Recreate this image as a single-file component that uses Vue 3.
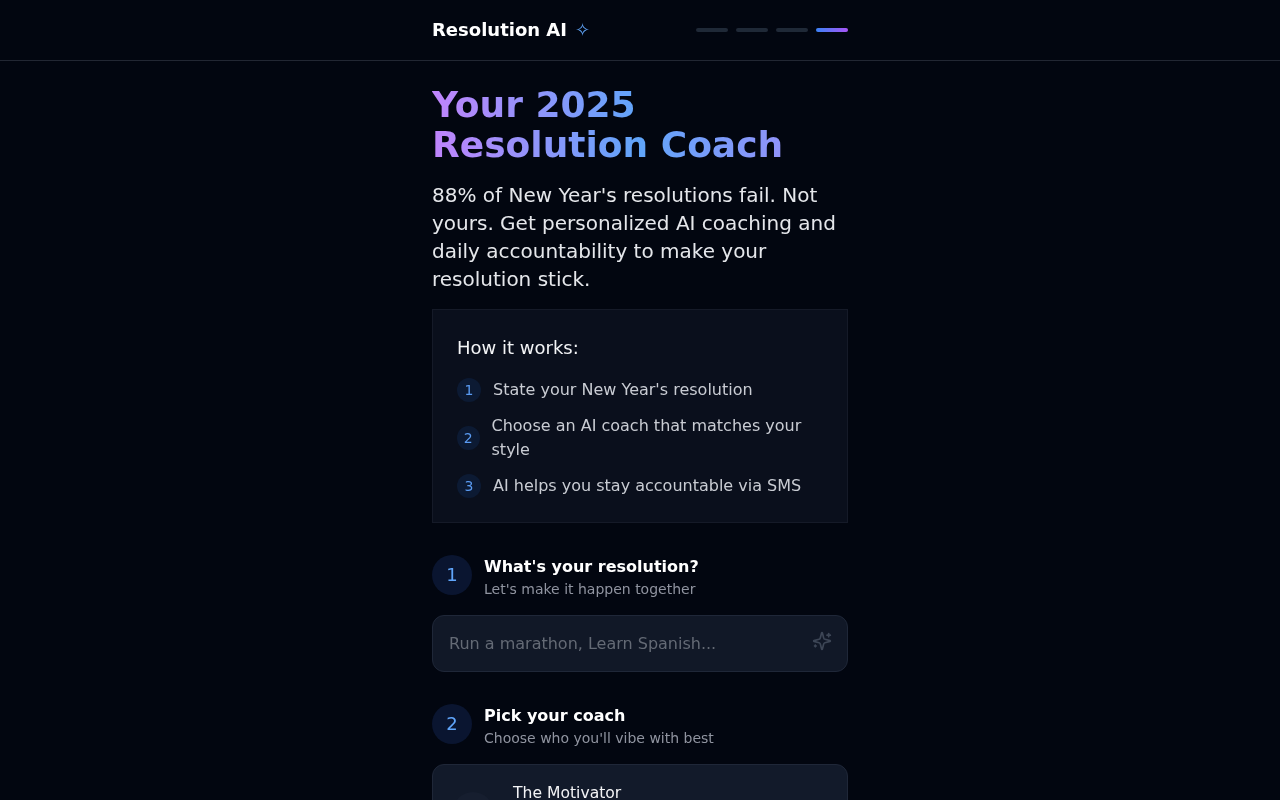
<script setup>
const steps = [
  "State your New Year's resolution",
  'Choose an AI coach that matches your style',
  'AI helps you stay accountable via SMS',
]
</script>

<template>
  <div class="page">
    <header class="top">
      <div class="top-inner">
        <div class="brand"><span>Resolution AI</span><span class="star">✧</span></div>
        <div class="progress">
          <span class="bar"></span><span class="bar"></span><span class="bar"></span><span class="bar on"></span>
        </div>
      </div>
    </header>
    <main class="main">
      <h1 class="title">Your 2025 Resolution Coach</h1>
      <p class="lead">88% of New Year's resolutions fail. Not yours. Get personalized AI coaching and daily accountability to make your resolution stick.</p>
      <section class="how">
        <h2 class="how-title">How it works:</h2>
        <ul class="how-list">
          <li v-for="(s, i) in steps" :key="i" class="how-item">
            <span class="how-num">{{ i + 1 }}</span>
            <span>{{ s }}</span>
          </li>
        </ul>
      </section>
      <section class="step">
        <div class="step-head">
          <div class="step-num">1</div>
          <div>
            <h3 class="step-title">What's your resolution?</h3>
            <p class="step-sub">Let's make it happen together</p>
          </div>
        </div>
        <div class="field">
          <input class="input" type="text" placeholder="Run a marathon, Learn Spanish..." />
          <svg class="spark" viewBox="0 0 24 24" fill="none" stroke="currentColor" stroke-width="2" stroke-linecap="round" stroke-linejoin="round">
            <path d="M9.937 15.5A2 2 0 0 0 8.5 14.063l-6.135-1.582a.5.5 0 0 1 0-.962L8.5 9.936A2 2 0 0 0 9.937 8.5l1.582-6.135a.5.5 0 0 1 .963 0L14.063 8.5A2 2 0 0 0 15.5 9.937l6.135 1.581a.5.5 0 0 1 0 .964L15.5 14.063a2 2 0 0 0-1.437 1.437l-1.582 6.135a.5.5 0 0 1-.963 0z"/>
            <path d="M20 3v4"/><path d="M22 5h-4"/><path d="M4 17v2"/><path d="M5 18H3"/>
          </svg>
        </div>
      </section>
      <section class="step">
        <div class="step-head">
          <div class="step-num">2</div>
          <div>
            <h3 class="step-title">Pick your coach</h3>
            <p class="step-sub">Choose who you'll vibe with best</p>
          </div>
        </div>
        <div class="coach">
          <div class="avatar"></div>
          <div class="coach-body">
            <div class="coach-name">The Motivator</div>
            <div class="coach-desc">High-energy encouragement to keep you moving every day</div>
          </div>
        </div>
      </section>
    </main>
  </div>
</template>

<style>
html, body { margin: 0; background: #020610; }
</style>

<style scoped>
.page { height: 800px; overflow: hidden; background: #020610; color: #fff; font-family: "DejaVu Sans", sans-serif; will-change: transform; }
.top { border-bottom: 1px solid #222733; }
.top-inner { box-sizing: border-box; width: 448px; height: 60px; margin: 0 auto; padding: 0 16px; display: flex; align-items: center; justify-content: space-between; }
.brand { display: flex; align-items: center; gap: 8px; font-size: 18px; font-weight: 700; line-height: 28px; }
.star { color: #60a5fa; font-weight: 400; }
.progress { display: flex; gap: 8px; }
.bar { width: 32px; height: 4px; border-radius: 9999px; background: #1f2937; }
.bar.on { background: linear-gradient(90deg, #3b82f6, #a855f7); }
.main { box-sizing: border-box; width: 448px; margin: 0 auto; padding: 24px 16px; }
.title { margin: 0; font-size: 36px; line-height: 40px; font-weight: 700; background: linear-gradient(90deg, #c084fc, #60a5fa, #a78bfa); -webkit-background-clip: text; background-clip: text; color: transparent; }
.lead { margin: 16px 0 0; font-size: 20px; line-height: 28px; color: #e5e7eb; }
.how { margin-top: 16px; padding: 24px; background: #0a0f1c; border: 1px solid #151a28; }
.how-title { margin: 0 0 16px; font-size: 18px; line-height: 28px; font-weight: 400; color: #f3f4f6; }
.how-list { list-style: none; margin: 0; padding: 0; display: flex; flex-direction: column; gap: 12px; }
.how-item { display: flex; align-items: center; gap: 12px; font-size: 16px; line-height: 24px; color: #c9ccd3; }
.how-num { width: 24px; height: 24px; border-radius: 50%; background: #0c1a33; color: #5a9bf2; font-size: 14px; display: flex; align-items: center; justify-content: center; }
.step { margin-top: 32px; }
.step-head { display: flex; gap: 12px; margin-bottom: 16px; }
.step-num { width: 40px; height: 40px; flex: none; border-radius: 50%; background: #0a1530; color: #60a5fa; font-size: 18px; line-height: 28px; display: flex; align-items: center; justify-content: center; }
.step-title { margin: 0; font-size: 16px; line-height: 24px; font-weight: 700; color: #fff; }
.step-sub { margin: 0; font-size: 14px; line-height: 20px; color: #9094a0; }
.field { position: relative; }
.input { box-sizing: border-box; display: block; width: 100%; height: 57px; padding: 16px; background: #111827; border: 1px solid #1f2738; border-radius: 12px; color: #fff; font: 16px/24px "DejaVu Sans", sans-serif; outline: none; }
.input::placeholder { color: #646a75; opacity: 1; }
.spark { position: absolute; top: 16px; right: 16px; width: 20px; height: 20px; color: #3d4656; }
.coach { display: flex; align-items: center; gap: 20px; padding: 16px 20px; background: #121a2a; border: 1px solid #1f2738; border-radius: 12px; }
.avatar { width: 40px; height: 40px; flex: none; border-radius: 50%; background: #161e2f; }
.coach-name { font-size: 15.6px; line-height: 24px; color: #f3f4f6; }
.coach-desc { font-size: 14px; line-height: 19px; color: #9ca3af; }
</style>
